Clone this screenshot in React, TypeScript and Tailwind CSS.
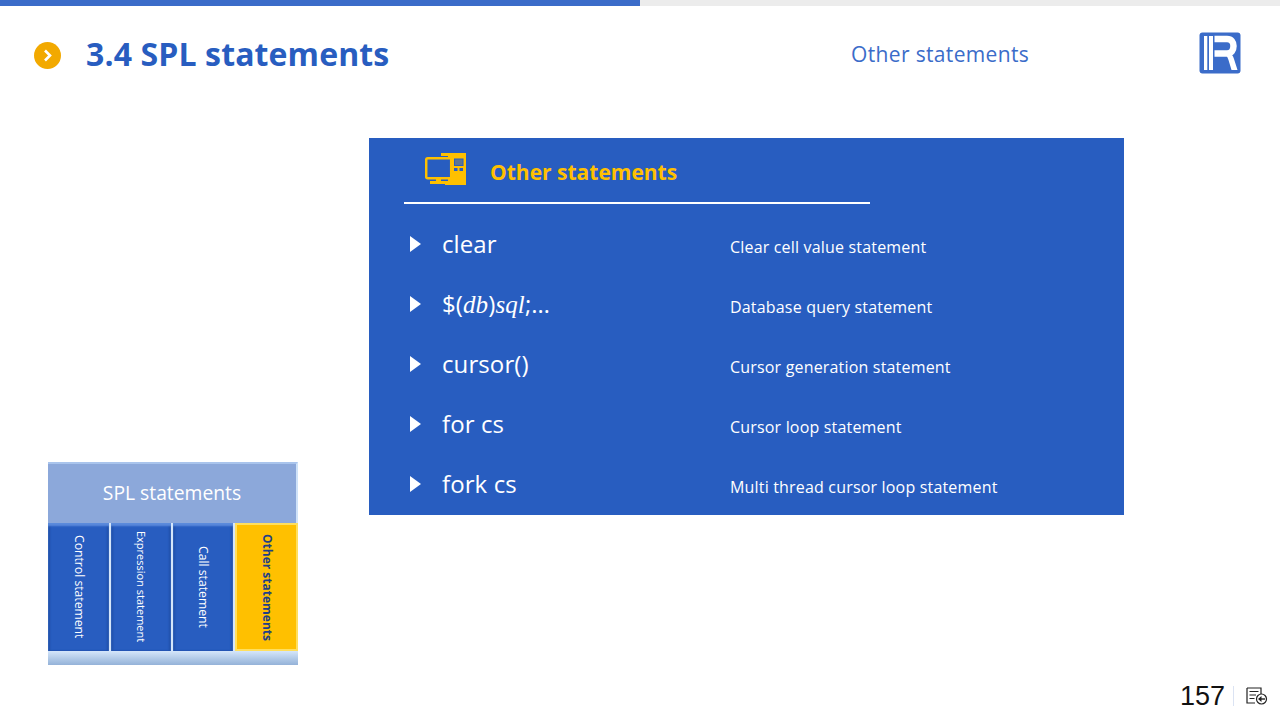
const FONT = "font-['Open_Sans','Noto_Sans',sans-serif]";

const rows = [
  { key: 'clear', desc: 'Clear cell value statement' },
  { key: 'db', desc: 'Database query statement' },
  { key: 'cursor()', desc: 'Cursor generation statement' },
  { key: 'for cs', desc: 'Cursor loop statement' },
  { key: 'fork cs', desc: 'Multi thread cursor loop statement' },
];

const columns = [
  { label: 'Control statement', size: 'text-[12.200px]', width: 'w-[63px]' },
  { label: 'Expression statement', size: 'text-[11px]', width: 'w-[62px]' },
  { label: 'Call statement', size: 'text-[12.200px]', width: 'w-[62px]' },
];

function Logo() {
  return (
    <svg width="42" height="42" viewBox="0 0 42 42">
      <rect x="0.5" y="0.5" width="41" height="41" rx="3" fill="#3b6cc9" />
      <path d="M5 4h3.300v34H5zM10 4h4v34h-4z" fill="#fff" />
      <path d="M15.500 7h12.500c4.500 0 6.500 3 6.500 7s-2 7.500-6.500 7.500H15.500" fill="none" stroke="#fff" strokeWidth="6.500" />
      <path d="M22 22c5 0 6 1.500 7.500 6l3 10H38.500l-3.500-11c-1-3.500-3-6-6-6.500z" fill="#fff" />
    </svg>
  );
}

function Computer() {
  return (
    <svg width="41" height="33" viewBox="0 0 41 33">
      <path d="M16 0h25v32H20v-4h3V3h-7z" fill="#ffc000" />
      <rect x="29" y="5.500" width="9.500" height="7.500" fill="#285dc0" />
      <rect x="30" y="6.500" width="7.500" height="5.500" fill="#ffc000" opacity="0.25" />
      <rect x="29" y="15" width="3.500" height="3" fill="#285dc0" />
      <rect x="34.500" y="15" width="3.500" height="3" fill="#285dc0" />
      <rect x="1.200" y="5.200" width="25" height="20" rx="1.500" fill="#285dc0" stroke="#ffc000" strokeWidth="2.500" />
      <path d="M11 25h5v3h6v3H5v-3h6z" fill="#ffc000" />
    </svg>
  );
}

function ReturnIcon() {
  return (
    <svg width="22" height="18" viewBox="0 0 22 18" fill="none" stroke="#222" strokeWidth="1.200">
      <path d="M1 1h14v6M1 1v15h8" />
      <path d="M3.500 4.500h9M3.500 8h6.500M3.500 11.500h5" />
      <circle cx="15.500" cy="12" r="5" fill="#fff" />
      <path d="M19 12h-4" strokeWidth="1.400" />
      <path d="M15.500 9 12 12l3.500 3z" fill="#222" stroke="none" />
    </svg>
  );
}

export default function App() {
  return (
    <div className={`${FONT} w-[1280px] h-[720px] overflow-hidden bg-white flex flex-col`}>
      {/* progress */}
      <div className="flex h-[6px] bg-[#ececec]">
        <div className="w-[640px] bg-[#3b6cc9]" />
      </div>

      {/* header */}
      <div className="flex items-center h-[98px] pl-[34px] shrink-0">
        <div className="w-[27px] h-[27px] rounded-full bg-[#f2a900] flex items-center justify-center">
          <svg width="11" height="13" viewBox="0 0 11 13" fill="none" stroke="#fff" strokeWidth="2.600">
            <path d="M3 1.500 8 6.500 3 11.500" />
          </svg>
        </div>
        <h1 className="ml-[25px] mb-[2px] w-[765px] text-[32px] font-bold leading-none text-[#285dc0] tracking-[0.12px]">
          3.4 SPL statements
        </h1>
        <div className="w-[348px] mb-[2px] text-[21px] leading-none text-[#3b6cc9] tracking-[0.35px]">Other statements</div>
        <div className="flex mb-[4px]">
          <Logo />
        </div>
      </div>

      {/* body */}
      <div className="flex h-[574px] shrink-0">
        <div className="w-[369px] pl-[48px] pt-[358px] shrink-0">
          {/* mini diagram */}
          <div className="w-[250px] h-[203px] flex flex-col">
            <div className="h-[61px] bg-[#8ca8da] border-t-2 border-t-[#a9c4ec] border-r-2 border-r-[#cfe2f8] flex items-center justify-center pb-[2px] text-[19.300px] leading-none text-white">
              SPL statements
            </div>
            <div className="h-[128px] flex">
              {columns.map((c) => (
                <div
                  key={c.label}
                  className={`${c.width} shrink-0 bg-[#285dc0] border-r-2 border-r-[#d5e6fa] shadow-[inset_0_3px_2px_#5b8bdc,inset_2px_0_2px_#1f4fa6,inset_-2px_0_2px_#1f4fa6] flex items-center justify-center`}
                >
                  <span className={`[writing-mode:vertical-rl] ${c.size} leading-none text-white whitespace-nowrap`}>{c.label}</span>
                </div>
              ))}
              <div className="flex-1 bg-[#ffc000] border-2 border-[#ffdf5e] flex items-center justify-center">
                <span className="[writing-mode:vertical-rl] text-[12px] font-bold leading-none text-[#1f3f86] whitespace-nowrap">
                  Other statements
                </span>
              </div>
            </div>
            <div className="h-[14px] bg-linear-to-b from-[#d5e6fa] to-[#94b2d8]" />
          </div>
        </div>

        {/* panel */}
        <div className="mt-[34px] w-[755px] h-[377px] bg-[#285dc0] shrink-0 pl-[35px]">
          <div className="w-[466px] h-[66px] border-b-2 border-white flex items-center pl-[21px] pb-[2px]">
            <Computer />
            <span className="ml-[24px] mt-[6px] text-[21px] font-bold leading-none text-[#ffc000]">Other statements</span>
          </div>
          <div className="mt-[11px] flex flex-col">
            {rows.map((r) => (
              <div key={r.key} className="h-[60px] flex items-center text-white">
                <svg className="ml-[6px] mb-[3px]" width="11" height="16" viewBox="0 0 11 16">
                  <path d="M0 0 11 8 0 16z" fill="#fff" />
                </svg>
                <div className="ml-[21px] w-[288px] text-[24px] leading-none mb-[2px] tracking-[0.1px]">
                  {r.key === 'db' ? (
                    <span>
                      $(<span className="font-['Liberation_Serif',serif] italic text-[25px]">db</span>)
                      <span className="font-['Liberation_Serif',serif] italic text-[25px]">sql</span>;…
                    </span>
                  ) : (
                    r.key
                  )}
                </div>
                <div className="mt-[4px] text-[16px] leading-none tracking-[0.18px]">{r.desc}</div>
              </div>
            ))}
          </div>
        </div>
      </div>

      {/* page number */}
      <div className="flex items-center h-[34px] pl-[1180px] pt-[2px]">
        <span className="font-['Liberation_Sans',sans-serif] text-[27px] leading-none text-[#111] w-[53px] shrink-0">157</span>
        <span className="w-px h-[20px] bg-[#dbe3f3] shrink-0" />
        <span className="ml-[12px] flex shrink-0">
          <ReturnIcon />
        </span>
      </div>
    </div>
  );
}
